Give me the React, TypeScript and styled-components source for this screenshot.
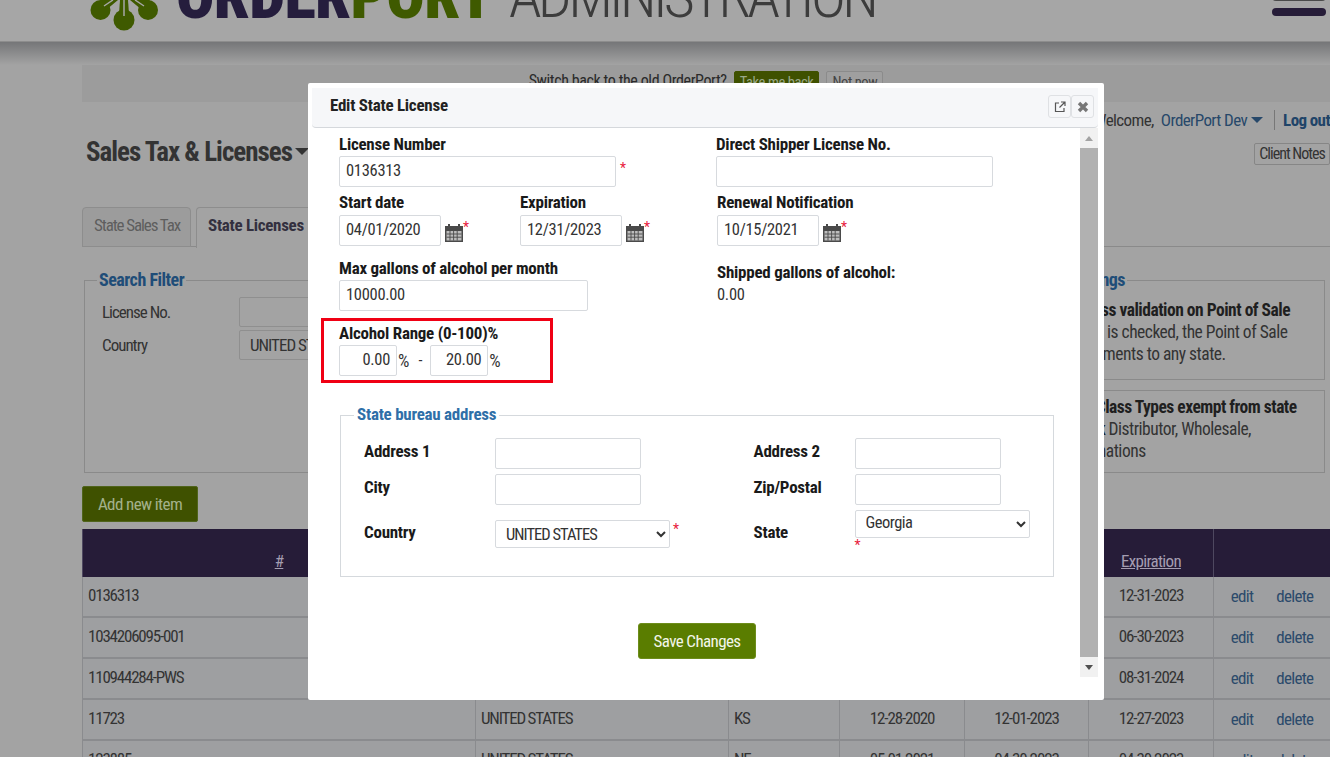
import React from "react";
import styled, { createGlobalStyle } from "styled-components";

const FONT = `"Roboto", "Open Sans", "Liberation Sans", Arial, sans-serif`;

const Global = createGlobalStyle`
  html, body { margin: 0; padding: 0; height: 757px; overflow: hidden; background: #a3a3a3; }
  body { font-family: ${FONT}; font-stretch: 75%; font-size: 17px; color: #222; }
  * { box-sizing: border-box; }
  select, button { font-family: ${FONT}; font-stretch: 75%; }
`;

const Screen = styled.div`
  position: relative;
  width: 1330px;
  height: 757px;
  overflow: hidden;
  background: #a3a3a3;
`;

const Header = styled.header`
  height: 42px;
  display: flex;
  align-items: flex-start;
  padding: 0 4px 0 90px;
  overflow: hidden;
  background: #a6a6a6;
  border-bottom: 1px solid #8d8d8d;
`;
const Logo = styled.svg`
  width: 70px;
  height: 32px;
  flex: none;
`;
const Brand = styled.div`
  margin-left: 16px;
  height: 42px;
  padding-bottom: 24px;
  display: flex;
  align-items: flex-end;
  font-size: 64px;
  line-height: 42px;
  white-space: nowrap;
`;
const BrandBold = styled.span<{ $c: string }>`
  font-weight: 900;
  letter-spacing: -0.8px;
  color: ${(p) => p.$c};
`;
const BrandThin = styled.span`
  margin-left: 16px;
  font-size: 60px;
  letter-spacing: -3.9px;
  color: #3c3c3c;
  font-weight: 300;
`;
const Burger = styled.div`
  margin: 8px 0 0 auto;
  width: 54px;
  height: 8px;
  border-radius: 4px;
  background: #261c38;
  box-shadow: 0 -15px 0 #4a4a4a;
`;
const ShadowBand = styled.div`
  height: 23px;
  background: linear-gradient(#757678, #a3a3a3);
`;

const Main = styled.main`
  padding-left: 82px;
`;
const Notice = styled.div`
  height: 37px;
  background: #9c9c9c;
  display: flex;
  justify-content: center;
  align-items: flex-start;
  gap: 7px;
  padding: 6px 0 0 0;
  font-size: 16px;
  letter-spacing: -0.4px;
  color: #2a2a2a;
  white-space: nowrap;
`;
const NoticeBtn = styled.span<{ $green?: boolean }>`
  height: 22px;
  padding: 2px 5px;
  font-size: 14.5px;
  letter-spacing: -0.4px;
  border-radius: 2px;
  color: ${(p) => (p.$green ? "#9aa98a" : "#444")};
  background: ${(p) => (p.$green ? "#3f5100" : "#9f9f9f")};
  border: 1px solid ${(p) => (p.$green ? "#3f5100" : "#8b8b8b")};
`;
const TitleRow = styled.div`
  height: 105px;
  display: flex;
  justify-content: space-between;
  padding: 8px 0 0 4px;
`;
const Title = styled.h1`
  margin: 25px 0 0;
  font-size: 27px;
  line-height: 34px;
  font-weight: 700;
  letter-spacing: -1px;
  color: #333;
  white-space: nowrap;
`;
const Caret = styled.span`
  display: inline-block;
  width: 0;
  height: 0;
  margin-left: 4px;
  vertical-align: middle;
  border-left: 6px solid transparent;
  border-right: 6px solid transparent;
  border-top: 6px solid currentColor;
`;
const TitleCaret = styled(Caret)`
  margin: 0 0 5px 3px;
  border-left-width: 7px;
  border-right-width: 7px;
  border-top-width: 7px;
`;
const UserCol = styled.div`
  display: flex;
  flex-direction: column;
  align-items: flex-end;
  gap: 13px;
`;
const UserLine = styled.div`
  display: flex;
  align-items: center;
  height: 20px;
  font-size: 17px;
  letter-spacing: -0.6px;
  color: #333;
  white-space: nowrap;
`;
const UserLink = styled.span`
  margin-left: 7px;
  color: #27486a;
`;
const UserCaret = styled(Caret)`
  color: #27486a;
`;
const LogOut = styled.span`
  margin-left: 11px;
  padding-left: 8px;
  border-left: 1px solid #777;
  font-weight: 700;
  color: #1f4468;
`;
const NotesBtn = styled.span`
  height: 22px;
  width: 76px;
  text-align: center;
  border: 1px solid #868686;
  font-size: 16px;
  letter-spacing: -1px;
  line-height: 20px;
  color: #333;
  border-radius: 2px;
  white-space: nowrap;
`;

const Tabs = styled.div`
  height: 40px;
  display: flex;
  gap: 5px;
  border-bottom: 1px solid #8a8a8a;
`;
const Tab = styled.div<{ $active?: boolean }>`
  height: ${(p) => (p.$active ? "41px" : "40px")};
  padding: 7px 10px 0 11px;
  font-size: 17px;
  letter-spacing: ${(p) => (p.$active ? "-0.3px" : "-1.1px")};
  white-space: nowrap;
  border: 1px solid #8d8d8d;
  border-bottom: ${(p) => (p.$active ? "none" : "1px solid #8d8d8d")};
  border-radius: 4px 4px 0 0;
  font-weight: ${(p) => (p.$active ? 700 : 400)};
  color: ${(p) => (p.$active ? "#33303f" : "#5e5e5e")};
  background: ${(p) => (p.$active ? "#a3a3a3" : "#9c9c9c")};
`;

const Panels = styled.div`
  margin: 24px 5px 0 2px;
  display: flex;
  justify-content: space-between;
  height: 202px;
`;
const Fieldset = styled.fieldset<{ $h: number }>`
  margin: 0;
  padding: 0;
  min-width: 0;
  border: 1px solid #8a8a8a;
  height: ${(p) => p.$h}px;
`;
const SearchSet = styled(Fieldset)`
  width: 890px;
`;
const PageLegend = styled.legend<{ $ml?: number }>`
  margin-left: ${(p) => p.$ml ?? 12}px;
  padding: 0 2px;
  font-size: 18px;
  line-height: 18px;
  letter-spacing: -0.5px;
  font-weight: 700;
  color: #1f4d78;
`;
const FilterRow = styled.div`
  display: grid;
  grid-template-columns: 137px 1fr;
  align-items: center;
  height: 33px;
  padding: 0 17px;
  font-size: 17px;
  letter-spacing: -1px;
  color: #333;
  position: relative;
  top: 6px;
`;
const FilterInput = styled.div`
  height: 30px;
  padding: 4px 10px;
  border: 1px solid #8f8f8f;
  border-radius: 2px;
  white-space: nowrap;
`;
const SettingText = styled.div`
  padding: 10px 0 0 10px;
  font-size: 17.5px;
  letter-spacing: -0.5px;
  line-height: 22px;
  white-space: nowrap;
  overflow: hidden;
  color: #333;
  b { color: #1f1f1f; }
`;
const SettingBox = styled.div`
  height: 83px;
  margin-top: 10px;
  border: 1px solid #8a8a8a;
  padding: 5px 0 0 10px;
  font-size: 17.5px;
  letter-spacing: -0.5px;
  line-height: 22px;
  white-space: nowrap;
  overflow: hidden;
  color: #333;
  b { color: #1f1f1f; }
`;
const SettingsWrap = styled.div`
  width: 323px;
  flex: none;
`;

const AddBtn = styled.div`
  margin-top: 13px;
  width: 116px;
  height: 36px;
  background: #3f5100;
  border: 1px solid #50641c;
  border-radius: 2px;
  color: #a4b18c;
  font-size: 17px;
  letter-spacing: -0.6px;
  line-height: 34px;
  text-align: center;
`;
const Table = styled.div`
  margin-top: 7px;
`;
const TableGrid = styled.div<{ $head?: boolean }>`
  display: grid;
  grid-template-columns: 393px 253px 111px 125px 124px 125px 117px;
  height: ${(p) => (p.$head ? "48px" : "41px")};
  background: ${(p) => (p.$head ? "#261c38" : "#9e9fa1")};
  border-bottom: ${(p) => (p.$head ? "none" : "2px solid #8a8b8e")};
`;
const Cell = styled.div<{ $center?: boolean }>`
  display: flex;
  align-items: center;
  justify-content: ${(p) => (p.$center ? "center" : "flex-start")};
  padding: 0 5px 4px;
  font-size: 17px;
  letter-spacing: ${(p) => (p.$center ? "-1.1px" : "-1.2px")};
  color: #333;
  border-left: 1px solid #8a8b8e;
  white-space: nowrap;
`;
const HeadCell = styled.div`
  display: flex;
  align-items: flex-end;
  justify-content: center;
  padding-bottom: 6px;
  font-size: 17px;
  letter-spacing: -0.7px;
  color: #a49db1;
  text-decoration: underline;
  border-left: 1px solid #4e4860;
`;
const ActionCell = styled(Cell)`
  gap: 23px;
  justify-content: center;
  letter-spacing: -0.7px;
  padding-bottom: 2px;
  color: #2b4a6b;
`;

const Modal = styled.div`
  position: absolute;
  left: 308px;
  top: 83px;
  width: 796px;
  height: 617px;
  background: #fff;
  border-radius: 2px;
  padding: 5px 0 0 4px;
`;
const ModalHead = styled.div`
  width: 786px;
  height: 40px;
  display: flex;
  align-items: flex-start;
  justify-content: space-between;
  padding: 7px 4px 0 18px;
  background: #f6f7f9;
  border-bottom: 1px solid #d5d8dc;
  border-radius: 0 0 4px 4px;
`;
const ModalTitle = styled.h2`
  margin: 0;
  font-size: 17px;
  line-height: 20px;
  letter-spacing: -0.25px;
  font-weight: 700;
  color: #222;
`;
const HeadBtns = styled.div`
  display: flex;
`;
const HeadBtn = styled.span`
  width: 23px;
  height: 23px;
  display: flex;
  align-items: center;
  justify-content: center;
  border: 1px solid #dfe1e4;
  border-radius: 3px;
  background: #f6f7f9;
`;
const ModalBody = styled.div`
  display: flex;
  height: 549px;
`;
const Form = styled.div`
  width: 768px;
  padding: 6px 0 0 27px;
`;
const Scrollbar = styled.div`
  width: 18px;
  display: flex;
  flex-direction: column;
  background: #f1f1f1;
`;
const ScrollArrow = styled.div<{ $down?: boolean }>`
  height: 20px;
  flex: none;
  display: flex;
  align-items: center;
  justify-content: center;
  &::after {
    content: "";
    border-left: 4px solid transparent;
    border-right: 4px solid transparent;
    ${(p) => (p.$down ? "border-top: 5px solid #505050;" : "border-bottom: 5px solid #a3a3a3;")}
  }
`;
const ScrollThumb = styled.div`
  flex: 1;
  background: #b1b1b1;
`;
const Cols = styled.div`
  display: grid;
  grid-template-columns: 377px 1fr;
`;
const Field = styled.div<{ $h: number; $nudge?: boolean }>`
  height: ${(p) => p.$h}px;
  ${(p) => (p.$nudge ? "padding-left: 1px;" : "")}
`;
const Label = styled.div`
  font-size: 17px;
  line-height: 20px;
  letter-spacing: -0.25px;
  font-weight: 700;
  color: #1a1a1a;
  white-space: nowrap;
`;
const TextInput = styled.div<{ $w: number; $right?: boolean }>`
  width: ${(p) => p.$w}px;
  height: 31px;
  flex: none;
  padding: 3px 6px;
  font-size: 16.5px;
  letter-spacing: -0.3px;
  line-height: 21px;
  color: #333;
  text-align: ${(p) => (p.$right ? "right" : "left")};
  background: #fff;
  border: 1px solid #d7dade;
  border-radius: 2px;
`;
const Star = styled.span`
  color: #e8203c;
  font-size: 14px;
  line-height: 14px;
  align-self: flex-start;
`;
const Inline = styled.div`
  display: flex;
  align-items: center;
`;
const TopRow = styled(Inline)`
  margin-top: 2px;
  ${Star} { margin: 5px 0 0 4px; }
`;
const DateGroup = styled.div`
  display: flex;
`;
const DateField = styled.div`
  width: 181px;
`;
const CalIcon = styled.svg`
  width: 20px;
  height: 21px;
  margin: 4px 0 0 3px;
  flex: none;
`;
const DateRow = styled(Inline)`
  margin-top: 3px;
  ${Star} { margin-top: 5px; margin-left: -1px; }
`;
const MaxInput = styled(TextInput)`
  margin-top: 2px;
`;
const ShippedLabel = styled(Label)`
  margin-top: 4px;
`;
const RangeBox = styled.div`
  width: 232px;
  height: 65px;
  margin: 8px 0 0 -18px;
  padding: 2px 0 0 15px;
  border: 3px solid #f00014;
`;
const RangeInputs = styled(Inline)`
  margin-top: 2px;
`;
const Unit = styled.span`
  font-size: 18px;
  color: #333;
  margin: 0 5px 0 1px;
`;
const Dash = styled.span`
  font-size: 16px;
  color: #333;
  margin: 0 8px 0 4px;
`;
const ReadValue = styled.div`
  margin-top: 3px;
  font-size: 16.5px;
  letter-spacing: -0.3px;
  color: #333;
`;
const Address = styled.fieldset`
  margin: 22px 0 0 1px;
  padding: 0 0 0 23px;
  width: 714px;
  height: 172px;
  min-width: 0;
  border: 1px solid #d5d9dd;
`;
const AddressLegend = styled.legend`
  margin-left: -10px;
  padding: 0 3px 2px;
  font-size: 17px;
  line-height: 19px;
  letter-spacing: -0.25px;
  font-weight: 700;
  color: #2f6fa8;
`;
const AddrGrid = styled.div`
  margin-top: 12px;
  display: grid;
  grid-template-columns: 131px 258.5px 101px 1fr;
  grid-template-rows: 36px 36px 46px;
  align-items: start;
`;
const AddrLabel = styled(Label)<{ $top?: number }>`
  padding-top: ${(p) => p.$top ?? 3}px;
`;
const SelectBox = styled.div`
  display: flex;
  align-items: flex-start;
  margin-top: 10px;
  ${Star} { margin: 2px 0 0 3px; }
`;
const StyledSelect = styled.select<{ $pb?: number; $ls?: string }>`
  width: 175px;
  height: 28px;
  padding: 0 0 ${(p) => p.$pb ?? 0}px 6px;
  font-size: 16.5px;
  letter-spacing: ${(p) => p.$ls ?? "-0.5px"};
  color: #333;
  background: #fff;
  border: 1px solid #d7dade;
  border-radius: 2px;
`;
const StateCell = styled.div`
  ${Star} { display: block; margin-top: 0; }
`;
const Actions = styled.div`
  margin-top: 46px;
  width: 716px;
  display: flex;
  justify-content: center;
`;
const SaveBtn = styled.button`
  width: 118px;
  height: 36px;
  background: #5a7d00;
  color: #f3f6ea;
  border: 1px solid #6d8d1b;
  border-radius: 3px;
  font-size: 17px;
  letter-spacing: -0.6px;
  white-space: nowrap;
`;

const rows = [
  ["0136313", "", "", "", "", "12-31-2023"],
  ["1034206095-001", "", "", "", "", "06-30-2023"],
  ["110944284-PWS", "", "", "", "", "08-31-2024"],
  ["11723", "UNITED STATES", "KS", "12-28-2020", "12-01-2023", "12-27-2023"],
  ["123885", "UNITED STATES", "NE", "05-01-2021", "04-30-2023", "04-30-2023"],
];

const Calendar = () => (
  <CalIcon viewBox="0 0 20 21">
    <path d="M1 4h18v16H1z" fill="#4a4a4a" />
    <path d="M4 2h2v3H4zM14 2h2v3h-2z" fill="#4a4a4a" />
    <path d="M2.5 9h15v9.5h-15z" fill="#bdbdbd" />
    <path d="M2.5 12h15M2.5 15.2h15M6 9v9.5M9.6 9v9.5M13.2 9v9.5" stroke="#4a4a4a" strokeWidth=".9" />
  </CalIcon>
);

const Required = () => <Star>*</Star>;

export default function App() {
  return (
    <Screen>
      <Global />
      <Header>
        <Logo viewBox="0 0 70 32">
          <g fill="#3f5a00">
            <circle cx="10.5" cy="10" r="10" />
            <circle cx="58" cy="10" r="10" />
            <circle cx="34" cy="20" r="10.5" />
            <path d="M10 0h18l-12 10zM60 0H40l12 10z" />
            <path d="M30 0h8l1 14h-10z" />
          </g>
          <path d="M34 0v16M23 0 14 6M45 0 54 6" stroke="#a6a6a6" strokeWidth="1.5" fill="none" />
        </Logo>
        <Brand>
          <BrandBold $c="#251d3d">ORDER</BrandBold>
          <BrandBold $c="#3f5a00">PORT</BrandBold>
          <BrandThin>ADMINISTRATION</BrandThin>
        </Brand>
        <Burger />
      </Header>
      <ShadowBand />
      <Main>
        <Notice>
          <span>Switch back to the old OrderPort?</span>
          <NoticeBtn $green>Take me back</NoticeBtn>
          <NoticeBtn>Not now</NoticeBtn>
        </Notice>
        <TitleRow>
          <Title>
            Sales Tax &amp; Licenses
            <TitleCaret />
          </Title>
          <UserCol>
            <UserLine>
              Welcome,<UserLink>OrderPort Dev</UserLink>
              <UserCaret />
              <LogOut>Log out</LogOut>
            </UserLine>
            <NotesBtn>Client Notes</NotesBtn>
          </UserCol>
        </TitleRow>
        <Tabs>
          <Tab>State Sales Tax</Tab>
          <Tab $active>State Licenses</Tab>
        </Tabs>
        <Panels>
          <SearchSet $h={202}>
            <PageLegend>Search Filter</PageLegend>
            <FilterRow>
              <span>License No.</span>
              <FilterInput />
            </FilterRow>
            <FilterRow>
              <span>Country</span>
              <FilterInput>UNITED STATES</FilterInput>
            </FilterRow>
          </SearchSet>
          <SettingsWrap>
            <Fieldset $h={109}>
              <PageLegend $ml={64}>Settings</PageLegend>
              <SettingText>
                <div><b>Bypass address validation on Point of Sale</b></div>
                <div>When this box is checked, the Point of Sale</div>
                <div>will allow shipments to any state.</div>
              </SettingText>
            </Fieldset>
            <SettingBox>
              <div><b>The License Class Types exempt from state</b></div>
              <div>Do then <b>check</b> Distributor, Wholesale,</div>
              <div>to other destinations</div>
            </SettingBox>
          </SettingsWrap>
        </Panels>
        <AddBtn>Add new item</AddBtn>
        <Table>
          <TableGrid $head>
            <HeadCell>#</HeadCell>
            <HeadCell />
            <HeadCell />
            <HeadCell />
            <HeadCell />
            <HeadCell>Expiration</HeadCell>
            <HeadCell />
          </TableGrid>
          {rows.map((r) => (
            <TableGrid key={r[0]}>
              <Cell>{r[0]}</Cell>
              <Cell>{r[1]}</Cell>
              <Cell>{r[2]}</Cell>
              <Cell $center>{r[3]}</Cell>
              <Cell $center>{r[4]}</Cell>
              <Cell $center>{r[5]}</Cell>
              <ActionCell>
                <span>edit</span>
                <span>delete</span>
              </ActionCell>
            </TableGrid>
          ))}
        </Table>
      </Main>

      <Modal>
        <ModalHead>
          <ModalTitle>Edit State License</ModalTitle>
          <HeadBtns>
            <HeadBtn>
              <svg width="12" height="12" viewBox="0 0 12 12" fill="none" stroke="#555" strokeWidth="1.2">
                <path d="M5 2H1.5v8.5H10V7" />
                <path d="M7 1h4v4M11 1 5.5 6.5" />
              </svg>
            </HeadBtn>
            <HeadBtn>
              <svg width="12" height="12" viewBox="0 0 12 12" stroke="#777" strokeWidth="3.4">
                <path d="M2 2l8 8M10 2l-8 8" />
              </svg>
            </HeadBtn>
          </HeadBtns>
        </ModalHead>
        <ModalBody>
          <Form>
            <Cols>
              <Field $h={58}>
                <Label>License Number</Label>
                <TopRow>
                  <TextInput $w={277}>0136313</TextInput>
                  <Required />
                </TopRow>
              </Field>
              <Field $h={58}>
                <Label>Direct Shipper License No.</Label>
                <TopRow>
                  <TextInput $w={277} />
                </TopRow>
              </Field>
              <Field $h={66}>
                <DateGroup>
                  <DateField>
                    <Label>Start date</Label>
                    <DateRow>
                      <TextInput $w={102}>04/01/2020</TextInput>
                      <Calendar />
                      <Required />
                    </DateRow>
                  </DateField>
                  <DateField>
                    <Label>Expiration</Label>
                    <DateRow>
                      <TextInput $w={102}>12/31/2023</TextInput>
                      <Calendar />
                      <Required />
                    </DateRow>
                  </DateField>
                </DateGroup>
              </Field>
              <Field $h={66} $nudge>
                <Label>Renewal Notification</Label>
                <DateRow>
                  <TextInput $w={102}>10/15/2021</TextInput>
                  <Calendar />
                  <Required />
                </DateRow>
              </Field>
              <Field $h={52}>
                <Label>Max gallons of alcohol per month</Label>
                <MaxInput $w={249}>10000.00</MaxInput>
              </Field>
              <Field $h={52} $nudge>
                <ShippedLabel>Shipped gallons of alcohol:</ShippedLabel>
                <ReadValue>0.00</ReadValue>
              </Field>
            </Cols>
            <RangeBox>
              <Label>Alcohol Range (0-100)%</Label>
              <RangeInputs>
                <TextInput $w={58} $right>0.00</TextInput>
                <Unit>%</Unit>
                <Dash>-</Dash>
                <TextInput $w={58} $right>20.00</TextInput>
                <Unit>%</Unit>
              </RangeInputs>
            </RangeBox>
            <Address>
              <AddressLegend>State bureau address</AddressLegend>
              <AddrGrid>
                <AddrLabel>Address 1</AddrLabel>
                <TextInput $w={146} />
                <AddrLabel>Address 2</AddrLabel>
                <TextInput $w={146} />
                <AddrLabel>City</AddrLabel>
                <TextInput $w={146} />
                <AddrLabel>Zip/Postal</AddrLabel>
                <TextInput $w={146} />
                <AddrLabel $top={12}>Country</AddrLabel>
                <SelectBox>
                  <StyledSelect defaultValue="US" $ls="-1px">
                    <option value="US">UNITED STATES</option>
                  </StyledSelect>
                  <Required />
                </SelectBox>
                <AddrLabel $top={12}>State</AddrLabel>
                <StateCell>
                  <StyledSelect defaultValue="GA" $pb={4}>
                    <option value="GA">Georgia</option>
                  </StyledSelect>
                  <Required />
                </StateCell>
              </AddrGrid>
            </Address>
            <Actions>
              <SaveBtn>Save Changes</SaveBtn>
            </Actions>
          </Form>
          <Scrollbar>
            <ScrollArrow />
            <ScrollThumb />
            <ScrollArrow $down />
          </Scrollbar>
        </ModalBody>
      </Modal>
    </Screen>
  );
}
